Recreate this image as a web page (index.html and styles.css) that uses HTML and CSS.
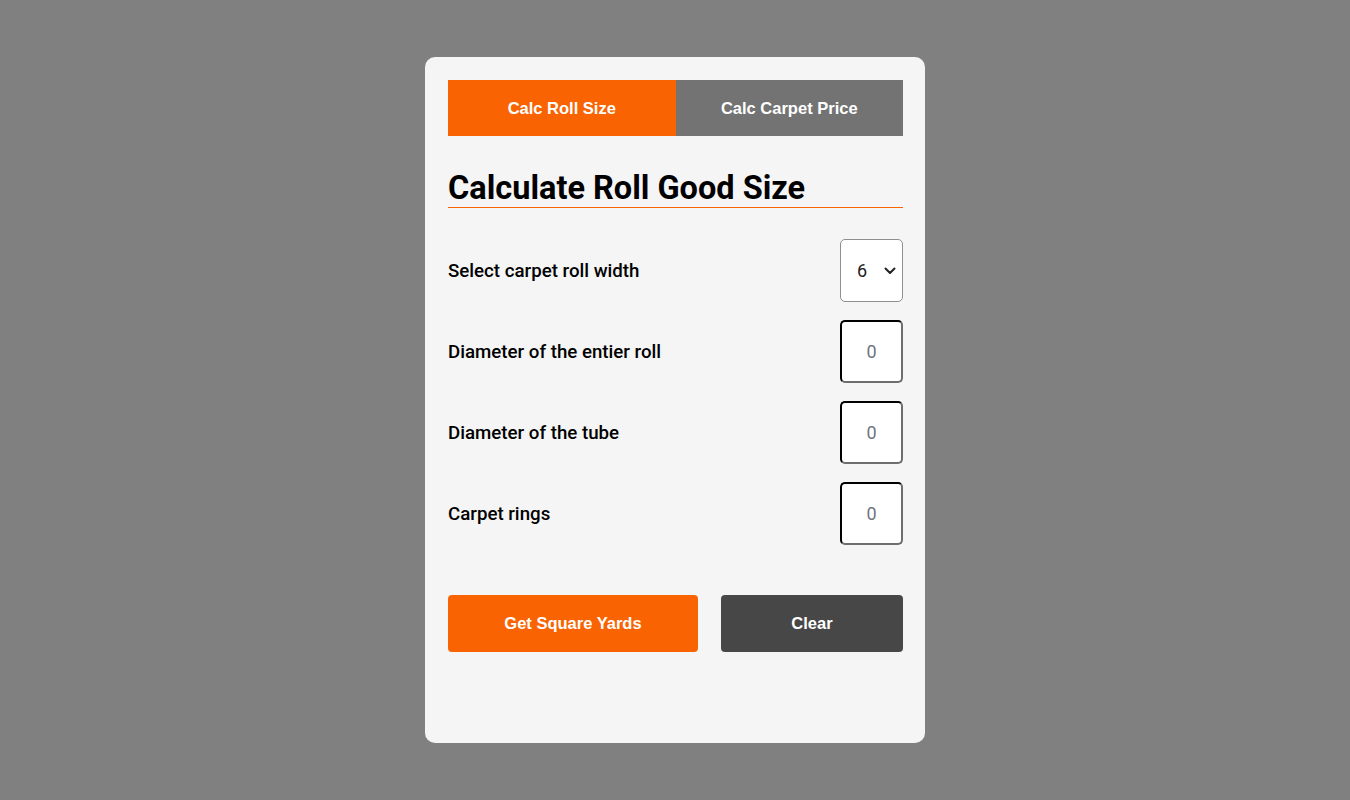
FILE: index.html
```html
<!DOCTYPE html>
<html>
<head>
<meta charset="utf-8">
<link rel="stylesheet" href="styles.css">
</head>
<body>
<div class="page">
  <div class="card">
    <div class="tabs">
      <button class="tab active">Calc Roll Size</button>
      <button class="tab">Calc Carpet Price</button>
    </div>
    <h1 class="title">Calculate Roll Good Size</h1>
    <div class="rows">
      <div class="row">
        <label class="label">Select carpet roll width</label>
        <div class="sel-wrap">
          <select class="sel"><option>6</option><option>12</option><option>15</option></select>
          <svg class="chev" width="12" height="8" viewBox="0 0 12 8"><path d="M1.5 1.5 L6 6 L10.5 1.5" fill="none" stroke="#222" stroke-width="2" stroke-linecap="round" stroke-linejoin="round"/></svg>
        </div>
      </div>
      <div class="row">
        <label class="label">Diameter of the entier roll</label>
        <input class="num" type="text" placeholder="0">
      </div>
      <div class="row">
        <label class="label">Diameter of the tube</label>
        <input class="num" type="text" placeholder="0">
      </div>
      <div class="row">
        <label class="label">Carpet rings</label>
        <input class="num" type="text" placeholder="0">
      </div>
    </div>
    <div class="actions">
      <button class="btn primary">Get Square Yards</button>
      <button class="btn dark">Clear</button>
    </div>
  </div>
</div>
</body>
</html>
```
FILE: styles.css
```css
html, body { margin: 0; padding: 0; }
body { background: #808080; font-family: Roboto, "Liberation Sans", sans-serif; }
.page { height: 800px; display: flex; justify-content: center; align-items: flex-start; }
.card {
  margin-top: 57px;
  width: 500px;
  height: 686px;
  box-sizing: border-box;
  padding: 23px 22px 23px 23px;
  background: #f5f5f5;
  border-radius: 10px;
}
.tabs { display: flex; height: 56px; }
.tab {
  flex: 1;
  border: none;
  margin: 0;
  background: #737373;
  color: #fff;
  font-family: "Liberation Sans", Arial, sans-serif;
  font-weight: bold;
  font-size: 16.5px;
  padding: 0;
}
.tab.active { background: #f96302; }
.title {
  margin: 36px 0 0 0;
  font-family: Roboto, sans-serif;
  font-weight: 700;
  font-size: 32.5px;
  line-height: 32px;
  color: #000;
  padding-bottom: 3px;
  border-bottom: 1px solid #f96302;
}
.rows { margin-top: 31px; display: flex; flex-direction: column; gap: 19px; }
.row { display: flex; align-items: center; justify-content: space-between; height: 62px; }
.label { font-size: 18.7px; color: #000; font-weight: 500; padding-top: 2px; }
.sel-wrap { position: relative; width: 63px; height: 63px; }
.sel {
  appearance: none;
  -webkit-appearance: none;
  width: 63px; height: 63px;
  box-sizing: border-box;
  border: 1px solid #8f8f8f;
  border-radius: 5px;
  background: #fff;
  font-family: Roboto, sans-serif;
  font-size: 18px;
  color: #222;
  padding: 0 0 0 16px;
  margin: 0;
}
.chev { position: absolute; left: 44px; top: 28px; pointer-events: none; }
.num {
  width: 63px; height: 63px;
  box-sizing: border-box;
  border: 2px inset #767676;
  border-top-color: #1a1a1a;
  border-left-color: #1a1a1a;
  border-right-color: #6e6e6e;
  border-bottom-color: #6e6e6e;
  border-radius: 5px;
  background: #fff;
  text-align: center;
  font-family: Roboto, sans-serif;
  font-size: 18px;
  padding: 0;
  margin: 0;
}
.num::placeholder { color: #6f7480; }
.actions { display: flex; justify-content: space-between; margin-top: 51px; }
.btn {
  height: 57px;
  border: none;
  border-radius: 4px;
  color: #fff;
  font-family: "Liberation Sans", Arial, sans-serif;
  font-weight: bold;
  font-size: 16.5px;
}
.btn.primary { width: 250px; background: #f96302; }
.btn.dark { width: 182px; background: #474747; }
```
